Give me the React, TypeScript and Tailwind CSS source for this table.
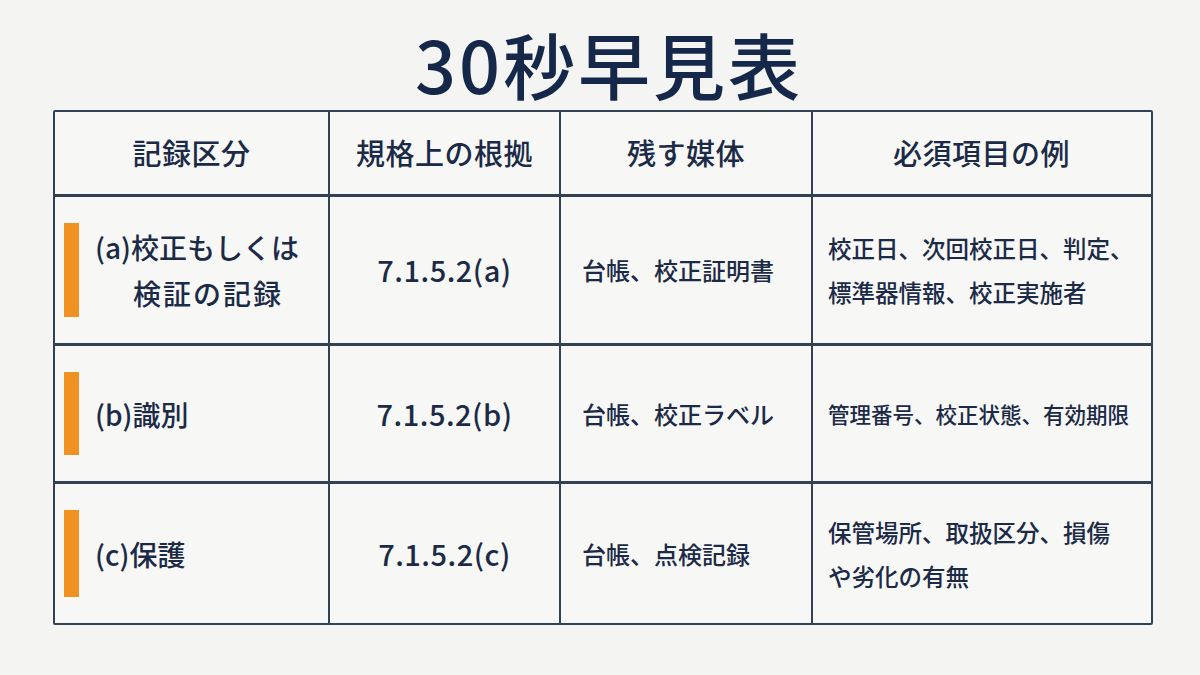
import React from "react";

const font = {
  fontFamily: '"Noto Sans CJK JP", "Noto Sans", sans-serif',
};

interface Row {
  label: React.ReactNode;
  clause: string;
  media: string;
  items: React.ReactNode;
  h: string;
}

const rows: Row[] = [
  {
    label: (
      <>
        <span className="block">(a)校正もしくは</span>
        <span className="block pl-[38px] tracking-[2px]">検証の記録</span>
      </>
    ),
    clause: "7.1.5.2(a)",
    media: "台帳、校正証明書",
    items: (
      <>
        <span className="block">校正日、次回校正日、判定、</span>
        <span className="block">標準器情報、校正実施者</span>
      </>
    ),
    h: "h-[149px]",
  },
  {
    label: <span className="block">(b)識別</span>,
    clause: "7.1.5.2(b)",
    media: "台帳、校正ラベル",
    items: <span className="block text-[21.5px]">管理番号、校正状態、有効期限</span>,
    h: "h-[138px]",
  },
  {
    label: <span className="block">(c)保護</span>,
    clause: "7.1.5.2(c)",
    media: "台帳、点検記録",
    items: (
      <>
        <span className="block">保管場所、取扱区分、損傷</span>
        <span className="block">や劣化の有無</span>
      </>
    ),
    h: "h-[139px]",
  },
];

const headers = ["記録区分", "規格上の根拠", "残す媒体", "必須項目の例"];

export default function App() {
  return (
    <div
      className="w-[1200px] h-[675px] bg-[#f4f4f2] text-[#1b2a47] overflow-hidden"
      style={font}
    >
      {/* Title */}
      <div className="h-[110px] pt-[27px] pl-[18px] flex justify-center">
        <h1 className="text-[72px] leading-none font-medium tracking-[3px] text-[#15284a]">
          30秒早見表
        </h1>
      </div>

      {/* Table */}
      <div className="ml-[53px] w-[1100px] border-[2.5px] border-[#334155] rounded-[2px] bg-[#f7f7f5]">
        <div className="grid grid-cols-[275px_231px_252px_337px] h-[85px] border-b-[3px] border-[#334155]">
          {headers.map((h, i) => (
            <div
              key={h}
              className={`flex items-center justify-center text-[29px] font-medium tracking-[0.5px] ${
                i < 3 ? "border-r-2 border-[#334155]" : ""
              }`}
            >
              {h}
            </div>
          ))}
        </div>

        {rows.map((r, idx) => (
          <div
            key={r.clause}
            className={`grid grid-cols-[275px_231px_252px_337px] ${r.h} ${
              idx < rows.length - 1 ? "border-b-[3px] border-[#334155]" : ""
            }`}
          >
            {/* Label cell with orange marker */}
            <div className="flex items-stretch py-[26px] pl-[9px] border-r-2 border-[#334155]">
              <div className="w-[15px] bg-[#ef9221] shrink-0" />
              <div className="flex flex-col justify-center pl-[16px] text-[28px] leading-[46px] font-medium whitespace-nowrap">
                {r.label}
              </div>
            </div>

            {/* Clause */}
            <div className="flex items-center justify-center border-r-2 border-[#334155] text-[29px] font-medium tracking-[0.5px]">
              {r.clause}
            </div>

            {/* Media */}
            <div className="flex items-center pl-[21px] border-r-2 border-[#334155] text-[24px] font-medium whitespace-nowrap">
              {r.media}
            </div>

            {/* Items */}
            <div className="flex flex-col justify-center pl-[15px] text-[23.5px] leading-[44px] font-medium whitespace-nowrap">
              {r.items}
            </div>
          </div>
        ))}
      </div>
    </div>
  );
}
